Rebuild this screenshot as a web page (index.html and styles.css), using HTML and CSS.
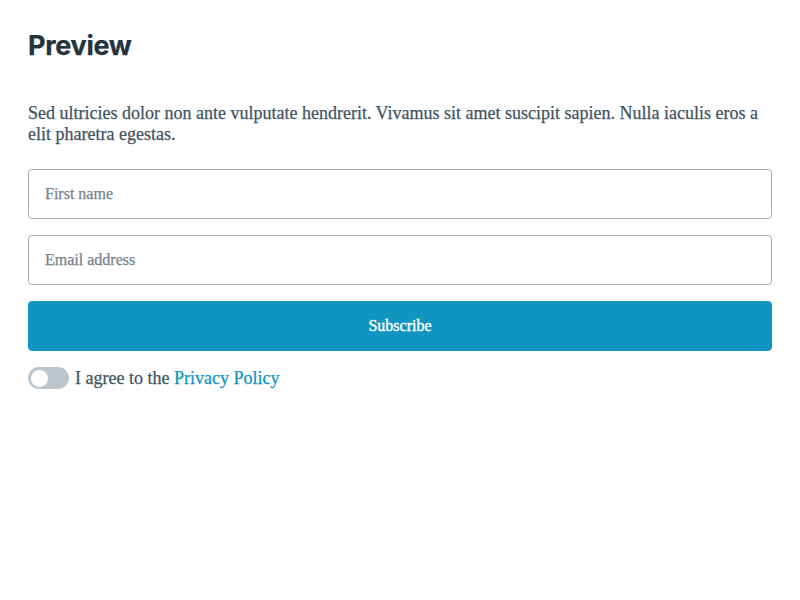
FILE: index.html
```html
<!DOCTYPE html>
<html lang="en">
<head>
<meta charset="utf-8">
<title>Preview</title>
<link rel="stylesheet" href="styles.css">
</head>
<body>
<main class="preview">
<h1 class="title">Preview</h1>
<form class="form">
<p class="intro">Sed ultricies dolor non ante vulputate hendrerit. Vivamus sit amet suscipit sapien. Nulla iaculis eros a elit pharetra egestas.</p>
<input class="field" type="text" placeholder="First name">
<input class="field" type="email" placeholder="Email address">
<button class="submit" type="button">Subscribe</button>
<label class="consent"><input class="switch" type="checkbox" role="switch"><span>I agree to the <a class="link" href="#">Privacy Policy</a></span></label>
</form>
</main>
</body>
</html>
```
FILE: styles.css
```css
* { box-sizing: border-box; }
body {
  margin: 0;
  background: #fff;
  color: #415462;
  font: 18px/21px "Liberation Serif", "Times New Roman", serif;
  -webkit-text-stroke: 0.25px currentColor;
}
.preview { padding: 28px; }
.title {
  margin: 0 0 39px;
  color: #24333e;
  font: 700 27px/36px Inter, sans-serif;
  letter-spacing: -0.3px;
}
.form { display: flex; flex-direction: column; }
.intro { margin: 0 0 24px; }
.field, .submit {
  width: 100%;
  height: 50px;
  margin: 0 0 16px;
  padding: 0 16px;
  border: 1px solid #a2afb9;
  border-radius: 4px;
  font: 16px/24px "Liberation Serif", "Times New Roman", serif;
}
.field { color: #415462; background: #fff; }
.field::placeholder { color: #73828c; opacity: 1; }
.submit {
  border-color: #1095c1;
  background: #1095c1;
  color: #fff;
  -webkit-text-stroke: 0.4px currentColor;
}
.consent { display: flex; align-items: center; gap: 6px; }
.switch {
  appearance: none;
  width: 41px;
  height: 22px;
  margin: 0;
  padding: 2.5px 3px;
  border-radius: 11px;
  background: #bbc6ce;
}
.switch::before {
  content: "";
  display: block;
  width: 17px;
  height: 17px;
  border-radius: 50%;
  background: #fff;
}
.link { color: #1095c1; text-decoration: none; }
```
